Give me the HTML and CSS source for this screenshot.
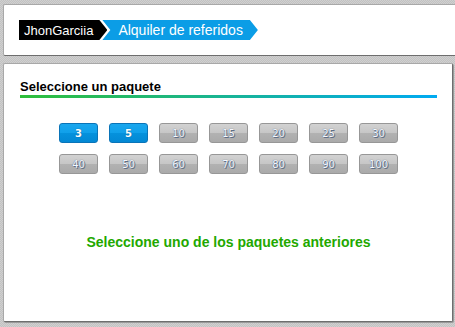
FILE: index.html
```html
<!DOCTYPE html>
<html lang="es">
<head>
<meta charset="utf-8">
<title>Alquiler de referidos</title>
<link rel="stylesheet" href="styles.css">
</head>
<body>
<div class="page">
  <div class="card card-top">
    <nav class="crumbs">
      <span class="crumb crumb-user">JhonGarciia</span>
      <span class="crumb crumb-current">Alquiler de referidos</span>
    </nav>
  </div>
  <div class="card card-main">
    <h2 class="title">Seleccione un paquete</h2>
    <div class="title-line"></div>
    <div class="packs">
      <button class="pack active">3</button>
      <button class="pack active">5</button>
      <button class="pack">10</button>
      <button class="pack">15</button>
      <button class="pack">20</button>
      <button class="pack">25</button>
      <button class="pack">30</button>
      <button class="pack">40</button>
      <button class="pack">50</button>
      <button class="pack">60</button>
      <button class="pack">70</button>
      <button class="pack">80</button>
      <button class="pack">90</button>
      <button class="pack">100</button>
    </div>
    <p class="hint">Seleccione uno de los paquetes anteriores</p>
  </div>
</div>
</body>
</html>
```
FILE: styles.css
```css
html, body {
  margin: 0;
  padding: 0;
  height: 100%;
  overflow: hidden;
}
body {
  background-color: #c9c9c9;
  background-image: repeating-conic-gradient(#c2c2c2 0 25%, #d0d0d0 0 50%);
  background-size: 2px 2px;
  font-family: "Liberation Sans", Arial, sans-serif;
}
.page {
  padding: 4px 0 0 3px;
}
.card {
  background: #fff;
  border: 1px solid #a8a8a8;
  border-bottom-color: #6e6e6e;
  box-sizing: border-box;
}
.card-top {
  width: 470px;
  height: 52px;
  padding: 15px 15px;
  border-right: none;
  border-radius: 2px 0 0 2px;
}
.card-main {
  margin-top: 7px;
  width: 450px;
  height: 259px;
  padding: 15px 15px 0 16px;
  border-right-color: #6e6e6e;
  border-radius: 2px;
  box-shadow: 1px 1px 0 #9a9a9a;
}
.crumbs {
  display: flex;
  height: 20px;
}
.crumb {
  display: flex;
  align-items: center;
  height: 20px;
  font-size: 14px;
  color: #fff;
  white-space: nowrap;
}
.crumb-user {
  background: #000;
  font-size: 13px;
  padding: 0 14px 0 5px;
  clip-path: polygon(0 0, calc(100% - 8px) 0, 100% 50%, calc(100% - 8px) 100%, 0 100%);
}
.crumb-current {
  background: #0b9de6;
  margin-left: -5px;
  padding: 0 15px 0 16px;
  clip-path: polygon(0 0, calc(100% - 8px) 0, 100% 50%, calc(100% - 8px) 100%, 0 100%, 8px 50%);
}
.title {
  margin: 0;
  font-size: 13px;
  font-weight: bold;
  line-height: 16px;
  color: #000;
}
.title-line {
  height: 3px;
  background: linear-gradient(90deg, #2fbe3a, #00aaf2);
}
.packs {
  margin: 25px auto 0;
  display: grid;
  grid-template-columns: repeat(7, 39px);
  grid-auto-rows: 20px;
  column-gap: 11px;
  row-gap: 11px;
  justify-content: center;
}
.pack {
  margin: 0;
  padding: 0;
  box-sizing: border-box;
  height: 20px;
  border: 1px solid #979797;
  border-radius: 3px;
  background: linear-gradient(#d2d2d2 0, #c6c6c6 50%, #b2b2b2 50%, #aaaaaa 100%);
  font-family: "DejaVu Sans", Verdana, sans-serif;
  font-size: 10px;
  color: #f4f8ff;
  text-shadow: 1px 1px 0 #5e6e86, 0 0 1px #3a4a66;
  cursor: pointer;
}
.pack.active {
  border-color: #0a74b8;
  background: linear-gradient(#1aa7ee 0, #10a0ea 50%, #0592dd 50%, #0388d4 100%);
  color: #fff;
  font-weight: bold;
  text-shadow: 0 0 1px #054a80;
}
.hint {
  margin: 59px 0 0;
  text-align: center;
  font-size: 14px;
  font-weight: bold;
  line-height: 18px;
  color: #22a800;
}
```
